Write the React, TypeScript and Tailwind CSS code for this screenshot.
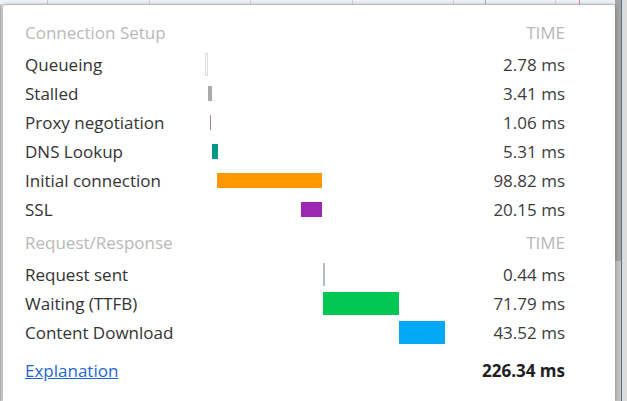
const SCALE = 240 / 227.13;

type Row = {
  label: string;
  start: number;
  ms: number;
  color: string;
  tall?: boolean;
  outline?: boolean;
  min?: number;
};

const setup: Row[] = [
  { label: "Queueing", start: 0, ms: 2.78, color: "#ffffff", tall: true, outline: true },
  { label: "Stalled", start: 2.78, ms: 3.41, color: "#aaaaaa" },
  { label: "Proxy negotiation", start: 4.9, ms: 1.06, color: "#a1887f" },
  { label: "DNS Lookup", start: 6.3, ms: 5.31, color: "#009688" },
  { label: "Initial connection", start: 11.4, ms: 99.3, color: "#ff9800" },
  { label: "SSL", start: 90.57, ms: 20.15, color: "#9c27b0" },
];

const request: Row[] = [
  { label: "Request sent", start: 111.38, ms: 0.44, color: "#b0bec5", tall: true, min: 2 },
  { label: "Waiting (TTFB)", start: 111.82, ms: 71.79, color: "#00c853", tall: true },
  { label: "Content Download", start: 183.61, ms: 43.52, color: "#03a9f4", tall: true },
];

const shown: Record<string, string> = { "Initial connection": "98.82" };

function Bar({ row }: { row: Row }) {
  const left = Math.round(row.start * SCALE);
  const width = Math.max(Math.round(row.ms * SCALE), row.min ?? 1);
  return (
    <div className="flex items-center">
      <div
        className={`${row.tall ? "h-[23px]" : "h-[15px]"} ${row.outline ? "border border-[#dddddd]" : ""}`}
        style={{ marginLeft: left, width, backgroundColor: row.color }}
      />
    </div>
  );
}

function TimingRow({ row }: { row: Row }) {
  return (
    <div className="grid h-[29px] grid-cols-[180px_240px_1fr] items-center">
      <span className="text-[#333333]">{row.label}</span>
      <Bar row={row} />
      <span className="text-right text-[#3c3c3c]">{shown[row.label] ?? row.ms.toFixed(2)} ms</span>
    </div>
  );
}

function Header({ title }: { title: string }) {
  return (
    <div className="flex h-[29px] items-center justify-between text-[#b8b8b8]">
      <span>{title}</span>
      <span>TIME</span>
    </div>
  );
}

const gridLines = [
  { x: 47, c: "bg-[#c9c9c9]" },
  { x: 149, c: "bg-[#d4d4d4]" },
  { x: 250, c: "bg-[#d4d4d4]" },
  { x: 352, c: "bg-[#d4d4d4]" },
  { x: 453, c: "bg-[#d4d4d4]" },
  { x: 485, c: "bg-[#9fa8f0]" },
  { x: 555, c: "bg-[#d4d4d4]" },
  { x: 579, c: "bg-[#f08080]" },
];

export default function App() {
  return (
    <div className="flex h-[401px] w-[627px] overflow-hidden bg-white font-['Open_Sans','Noto_Sans',sans-serif] text-[17px]">
      <div className="flex w-[615px] flex-col">
        <div className="relative h-[5px] shrink-0 border-b border-[#d8d8d8] bg-[#f0f2f9]">
          {gridLines.map((l) => (
            <div key={l.x} className={`absolute top-0 h-full w-px ${l.c}`} style={{ left: l.x }} />
          ))}
        </div>
        <div className="flex flex-1">
          <div className="w-[3px] border-l border-[#b5b5b5] bg-[#dadada]" />
          <div className="relative z-10 flex-1 rounded-t-[4px] bg-white pt-[13px] pl-[22px] pr-[50px] shadow-[0_0_4px_rgba(0,0,0,0.35)]">
            <Header title="Connection Setup" />
            <div className="mt-[3px]">
              {setup.map((r) => (
                <TimingRow key={r.label} row={r} />
              ))}
            </div>
            <div className="mt-[4px]">
              <Header title="Request/Response" />
            </div>
            <div className="mt-[3px]">
              {request.map((r) => (
                <TimingRow key={r.label} row={r} />
              ))}
            </div>
            <div className="mt-[9px] flex h-[29px] items-center justify-between">
              <a href="#" className="text-[#1e66d6] underline">
                Explanation
              </a>
              <span className="font-bold text-[#202020]">226.34 ms</span>
            </div>
          </div>
        </div>
      </div>
      <div className="flex flex-1">
        <div className="flex w-[6px] flex-col">
          <div className="h-[261px] bg-[#a4a4a4]" />
          <div className="flex-1 bg-[#c3c3c3]" />
        </div>
        <div className="w-px bg-[#56718c]" />
        <div className="flex-1 bg-[#dcdcdc]" />
      </div>
    </div>
  );
}
